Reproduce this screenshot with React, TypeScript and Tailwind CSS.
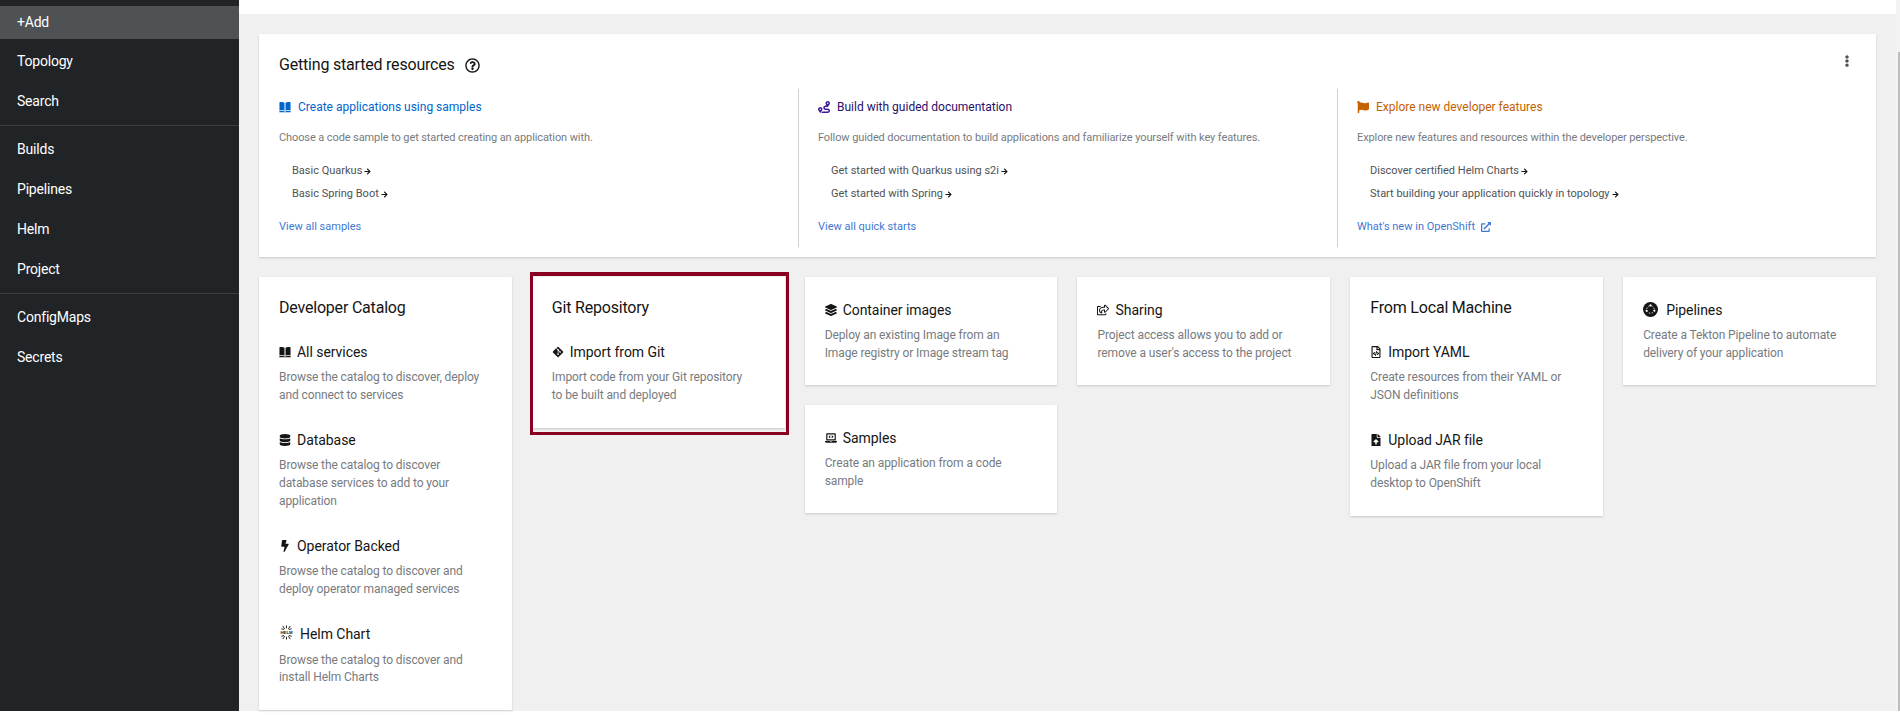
import React from "react";
import {
  FaRegQuestionCircle, FaRoute, FaFlag, FaArrowRight, FaExternalLinkAlt, FaEllipsisV,
  FaGitAlt, FaDatabase, FaBolt, FaLayerGroup, FaRegShareSquare, FaLaptopCode, FaRegFileCode, FaFileUpload,
} from "react-icons/fa";

const FONT = "font-['Roboto',sans-serif]";

function NavRow({ label, active }: { label: string; active?: boolean }) {
  return (
    <div className={active ? "flex h-[33px] items-center bg-[#4f5255] pl-[17px] text-[14px] tracking-[-0.2px] text-white" : "flex h-10 items-center pl-[17px] text-[14px] tracking-[-0.2px] text-white"}>
      {label}
    </div>
  );
}

function Sidebar() {
  return (
    <aside className="flex h-[711px] w-[239px] shrink-0 flex-col bg-[#212427] pt-[6px]">
      <NavRow label="+Add" active />
      <div className="mt-[2px]">
        <NavRow label="Topology" />
        <NavRow label="Search" />
      </div>
      <div className="mb-[3px] mt-1 h-px bg-[#3c3f42]" />
      <NavRow label="Builds" />
      <NavRow label="Pipelines" />
      <NavRow label="Helm" />
      <NavRow label="Project" />
      <div className="mb-[3px] mt-1 h-px bg-[#3c3f42]" />
      <NavRow label="ConfigMaps" />
      <NavRow label="Secrets" />
    </aside>
  );
}

function BookIcon({ className }: { className: string }) {
  return (
    <svg viewBox="0 0 16 16" className={className} fill="currentColor">
      <path d="M0.6 1.8C3 0.9 6 1.1 7.3 2.4V13C6 12 3 11.8 0.6 12.6Z" />
      <path d="M15.4 1.8C13 0.9 10 1.1 8.7 2.4V13C10 12 13 11.8 15.4 12.6Z" />
      <path d="M0.4 13.6C3 12.8 6 13 7.2 14H8.8C10 13 13 12.8 15.6 13.6V15H0.4Z" />
    </svg>
  );
}

function ResourceColumn({ icon, title, titleClass, desc, links, footer, footerIcon, divider, widthClass }: {
  icon: React.ReactNode; title: string; titleClass: string; desc: string; links: string[]; footer: string; footerIcon?: boolean; divider?: boolean; widthClass: string;
}) {
  return (
    <div className={`${widthClass} ${divider ? "border-l border-[#d2d2d2] pl-[19px]" : ""} pt-2`}>
      <div className={`flex h-5 items-center gap-[7px] text-[12px] ${titleClass}`}>
        {icon}
        <span>{title}</span>
      </div>
      <p className="mt-3 text-[11px] leading-[18px] tracking-[-0.1px] text-[#777b80]">{desc}</p>
      <ul className="mt-[15px] flex flex-col gap-[5px] pl-[13px]">
        {links.map((l) => (
          <li key={l} className="flex h-[18px] items-center gap-[2px] text-[11px] text-[#4f5255]">
            {l}
            <FaArrowRight className="h-[7px] w-[7px] text-[#151515]" />
          </li>
        ))}
      </ul>
      <div className="mt-[15px] flex h-[18px] items-center gap-[6px] text-[11px] text-[#3f78d2]">
        {footer}
        {footerIcon && <FaExternalLinkAlt className="h-[10px] w-[10px]" />}
      </div>
    </div>
  );
}

function ResourcesCard() {
  return (
    <section className="h-[223px] bg-white px-5 pt-[19px] shadow-[0_1px_2px_rgba(3,3,3,0.16)]">
      <div className="flex h-6 items-start justify-between pr-[3px]">
        <div className="flex h-6 items-center gap-[10px] text-[16px] tracking-[-0.2px] text-[#151515]">
          Getting started resources
          <FaRegQuestionCircle className="h-[15px] w-[15px]" />
        </div>
        <FaEllipsisV className="mt-[2px] h-3 w-3 text-[#4f5255]" />
      </div>
      <div className="mt-3 flex h-[158px]">
        <ResourceColumn
          widthClass="w-[519px]"
          icon={<BookIcon className="h-3 w-3 text-[#0066cc]" />}
          title="Create applications using samples"
          titleClass="text-[#0066cc]"
          desc="Choose a code sample to get started creating an application with."
          links={["Basic Quarkus", "Basic Spring Boot"]}
          footer="View all samples"
        />
        <ResourceColumn
          divider
          widthClass="w-[539px]"
          icon={<FaRoute className="h-3 w-3 text-[#40199a]" />}
          title="Build with guided documentation"
          titleClass="text-[#2a0f6b]"
          desc="Follow guided documentation to build applications and familiarize yourself with key features."
          links={["Get started with Quarkus using s2i", "Get started with Spring"]}
          footer="View all quick starts"
        />
        <ResourceColumn
          divider
          widthClass="flex-1"
          icon={<FaFlag className="h-3 w-3 text-[#c46100]" />}
          title="Explore new developer features"
          titleClass="text-[#c46100]"
          desc="Explore new features and resources within the developer perspective."
          links={["Discover certified Helm Charts", "Start building your application quickly in topology"]}
          footer="What's new in OpenShift"
          footerIcon
        />
      </div>
    </section>
  );
}

function HelmIcon() {
  return (
    <svg viewBox="0 0 16 16" className="h-[15px] w-[15px] shrink-0 -translate-y-[2px] text-[#151515]" fill="none" stroke="currentColor" strokeWidth="1">
      <path d="M4 1l2 3M12 1l-2 3M8 0.5v3M2.5 4l3 0.8M13.5 4l-3 0.8" />
      <text x="8" y="9.8" textAnchor="middle" fontSize="4.6" fontWeight="700" stroke="none" fill="currentColor" fontFamily="Liberation Sans, sans-serif">HELM</text>
      <path d="M4 15l2-3M12 15l-2-3M8 15.5v-3M2.5 12l3-0.8M13.5 12l-3-0.8" />
    </svg>
  );
}

function TektonIcon() {
  return (
    <svg viewBox="0 0 16 16" className="h-[15px] w-[15px] shrink-0 -translate-y-[1px]">
      <circle cx="8" cy="8" r="8" fill="#151515" />
      <circle cx="8" cy="8" r="4" fill="none" stroke="#fff" strokeWidth="0.9" strokeDasharray="1.6 1.6" />
      <circle cx="8" cy="3.6" r="1.1" fill="#fff" />
      <circle cx="3.8" cy="9.4" r="1.1" fill="#fff" />
      <circle cx="12.2" cy="9.4" r="1.1" fill="#fff" />
    </svg>
  );
}

function Item({ icon, title, desc, gapClass, descClass }: { icon: React.ReactNode; title: string; desc: React.ReactNode; gapClass?: string; descClass?: string }) {
  return (
    <div>
      <div className={`flex h-5 items-center ${gapClass ?? "gap-[6px]"} text-[14px] tracking-[-0.05px] text-[#151515]`}>
        {icon}
        <span>{title}</span>
      </div>
      <p className={`${descClass ?? "mt-[6px] leading-[18px]"} text-[12px] tracking-[-0.1px] text-[#777b80]`}>{desc}</p>
    </div>
  );
}

const icn = "h-3 w-3 shrink-0 text-[#151515]";

function GroupCard({ heading, children }: { heading: string; children: React.ReactNode }) {
  return (
    <div className="bg-white px-5 pb-6 pt-[19px] shadow-[0_1px_2px_rgba(3,3,3,0.16)]">
      <h2 className="h-6 text-[16px] leading-6 tracking-[-0.2px] text-[#151515]">{heading}</h2>
      <div className="mt-[22px] flex flex-col gap-[26px]">{children}</div>
    </div>
  );
}

function SingleCard(props: { icon: React.ReactNode; title: string; desc: React.ReactNode; gapClass?: string }) {
  return (
    <div className="bg-white px-5 py-[23px] shadow-[0_1px_2px_rgba(3,3,3,0.16)]">
      <Item {...props} />
    </div>
  );
}

function Grid() {
  return (
    <div className="mt-5 grid grid-cols-6 items-start gap-x-5">
      <GroupCard heading="Developer Catalog">
        <Item icon={<BookIcon className={icn} />} title="All services" desc={<>Browse the catalog to discover, deploy<br />and connect to services</>} />
        <Item icon={<FaDatabase className={icn} />} title="Database" desc={<>Browse the catalog to discover<br />database services to add to your<br />application</>} />
        <Item icon={<FaBolt className={icn} />} title="Operator Backed" desc={<>Browse the catalog to discover and<br />deploy operator managed services</>} />
        <Item gapClass="gap-[6px]" descClass="mt-2 leading-[17px]" icon={<HelmIcon />} title="Helm Chart" desc={<>Browse the catalog to discover and<br />install Helm Charts</>} />
      </GroupCard>
      <div className="relative">
        <GroupCard heading="Git Repository">
          <Item icon={<FaGitAlt className={icn} />} title="Import from Git" desc={<>Import code from your Git repository<br />to be built and deployed</>} />
        </GroupCard>
        <div className="absolute -bottom-[7px] -left-[2px] -right-[4px] -top-[5px] border-[3px] border-t-4 border-[#8a0020]" />
      </div>
      <div className="flex flex-col gap-5">
        <SingleCard icon={<FaLayerGroup className={icn} />} title="Container images" desc={<>Deploy an existing Image from an<br />Image registry or Image stream tag</>} />
        <SingleCard icon={<FaLaptopCode className={icn} />} title="Samples" desc={<>Create an application from a code<br />sample</>} />
      </div>
      <SingleCard icon={<FaRegShareSquare className={icn} />} title="Sharing" desc={<>Project access allows you to add or<br />remove a user's access to the project</>} />
      <GroupCard heading="From Local Machine">
        <Item icon={<FaRegFileCode className={icn} />} title="Import YAML" desc={<>Create resources from their YAML or<br />JSON definitions</>} />
        <Item icon={<FaFileUpload className={icn} />} title="Upload JAR file" desc={<>Upload a JAR file from your local<br />desktop to OpenShift</>} />
      </GroupCard>
      <SingleCard gapClass="gap-2" icon={<TektonIcon />} title="Pipelines" desc={<>Create a Tekton Pipeline to automate<br />delivery of your application</>} />
    </div>
  );
}

export default function App() {
  return (
    <div className={`${FONT} flex h-[715px] w-[1900px] items-start overflow-hidden bg-white`}>
      <Sidebar />
      <main className="flex h-[711px] flex-1 bg-[#f0f0f0]">
        <div className="flex-1">
          <div className="h-[14px] bg-white" />
          <div className="px-5 pt-5">
            <ResourcesCard />
            <Grid />
          </div>
        </div>
        <div className="flex h-full w-1 flex-col items-end bg-[#f3f3f3] pt-[52px]">
          <div className="w-[2px] flex-1 bg-[#bdbdbd]" />
        </div>
      </main>
    </div>
  );
}
